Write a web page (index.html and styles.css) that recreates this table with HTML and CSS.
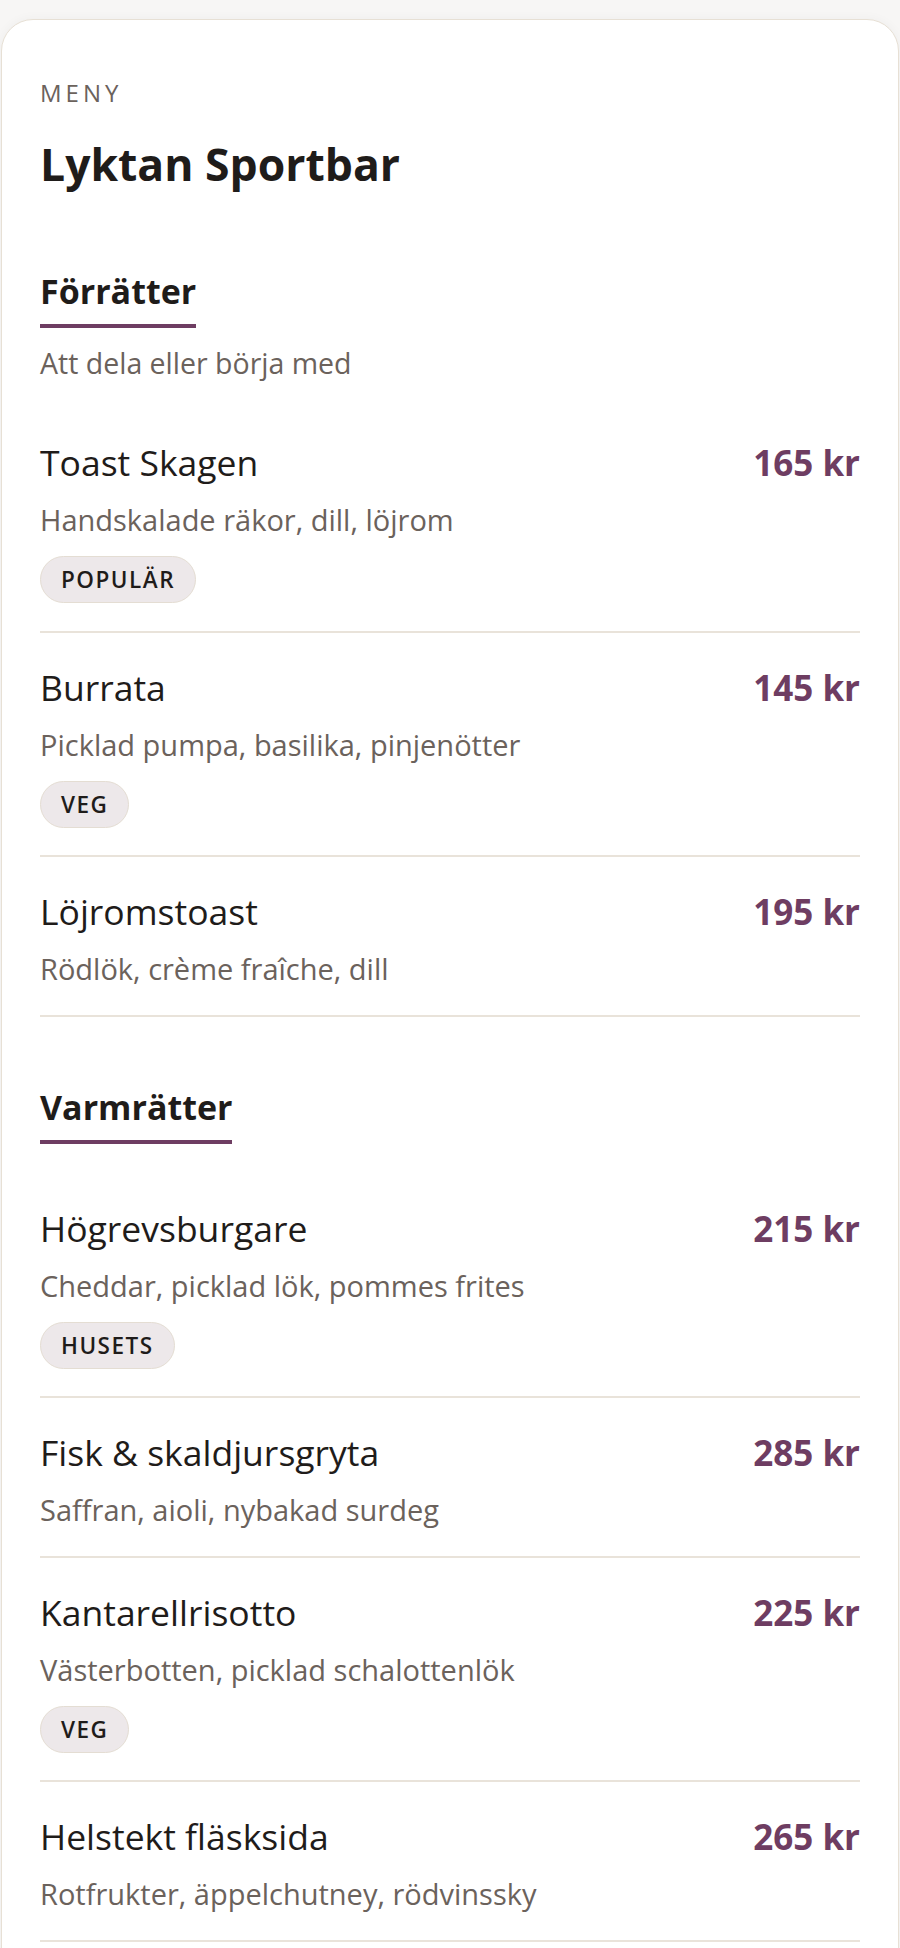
FILE: index.html
```html
<!DOCTYPE html>
<html lang="sv">
<head>
  <meta charset="UTF-8" />
  <meta name="viewport" content="width=device-width, initial-scale=1.0"/>
  <title>Meny - Lyktan Sportbar</title>
  <link rel="stylesheet" href="styles.css">
</head>
<body>

  <div class="menu-card">
    <div class="eyebrow">MENY</div>
    <h1 class="venue">Lyktan Sportbar</h1>

    <section class="menu-section">
      <h2 class="section-title">Förrätter</h2>
      <p class="section-sub">Att dela eller börja med</p>

      <div class="dish">
        <div class="dish-row">
          <span class="dish-name">Toast Skagen</span>
          <span class="dish-price">165 kr</span>
        </div>
        <div class="dish-desc">Handskalade räkor, dill, löjrom</div>
        <span class="tag">POPULÄR</span>
      </div>

      <div class="dish">
        <div class="dish-row">
          <span class="dish-name">Burrata</span>
          <span class="dish-price">145 kr</span>
        </div>
        <div class="dish-desc">Picklad pumpa, basilika, pinjenötter</div>
        <span class="tag">VEG</span>
      </div>

      <div class="dish">
        <div class="dish-row">
          <span class="dish-name">Löjromstoast</span>
          <span class="dish-price">195 kr</span>
        </div>
        <div class="dish-desc">Rödlök, crème fraîche, dill</div>
      </div>
    </section>

    <section class="menu-section">
      <h2 class="section-title">Varmrätter</h2>

      <div class="dish">
        <div class="dish-row">
          <span class="dish-name">Högrevsburgare</span>
          <span class="dish-price">215 kr</span>
        </div>
        <div class="dish-desc">Cheddar, picklad lök, pommes frites</div>
        <span class="tag">HUSETS</span>
      </div>

      <div class="dish">
        <div class="dish-row">
          <span class="dish-name">Fisk &amp; skaldjursgryta</span>
          <span class="dish-price">285 kr</span>
        </div>
        <div class="dish-desc">Saffran, aioli, nybakad surdeg</div>
      </div>

      <div class="dish">
        <div class="dish-row">
          <span class="dish-name">Kantarellrisotto</span>
          <span class="dish-price">225 kr</span>
        </div>
        <div class="dish-desc">Västerbotten, picklad schalottenlök</div>
        <span class="tag">VEG</span>
      </div>

      <div class="dish">
        <div class="dish-row">
          <span class="dish-name">Helstekt fläsksida</span>
          <span class="dish-price">265 kr</span>
        </div>
        <div class="dish-desc">Rotfrukter, äppelchutney, rödvinssky</div>
      </div>
    </section>
  </div>

</body>
</html>
```

FILE: styles.css
```css
body {
  margin: 0;
  background: #f7f6f5;
  font-family: 'Open Sans', 'Noto Sans', sans-serif;
  color: #1f1c1a;
}

.menu-card {
  margin: 19px 1px 0;
  padding: 58px 38px 40px;
  background: #ffffff;
  border: 1.5px solid #e7e0d5;
  border-radius: 32px;
  box-shadow: 0 0 12px rgba(0, 0, 0, 0.04);
}

.eyebrow {
  font-size: 24px;
  letter-spacing: 4px;
  color: #6b625c;
  line-height: 30px;
}

.venue {
  margin: 28px 0 0;
  font-size: 44.5px;
  font-weight: 700;
  line-height: 56px;
}

.menu-section {
  margin-top: 77px;
}

.menu-section + .menu-section {
  margin-top: 68px;
}

.section-title {
  width: fit-content;
  margin: 0 0 30px;
  padding-bottom: 11px;
  font-size: 34px;
  font-weight: 700;
  line-height: 44px;
  border-bottom: 4px solid #6e3d62;
}

.section-sub {
  margin: -13px 0 27px;
  font-size: 28.5px;
  line-height: 36px;
  color: #6b625c;
}

.dish {
  padding: 32px 0 27.5px;
  border-bottom: 2px solid #e9e3da;
}

.dish-row {
  display: flex;
  justify-content: space-between;
  align-items: baseline;
}

.dish-name {
  font-size: 35.5px;
  font-weight: 500;
  line-height: 44px;
}

.dish-price {
  font-size: 35px;
  font-weight: 700;
  line-height: 44px;
  color: #6e3d62;
}

.dish-desc {
  margin-top: 17px;
  font-size: 29px;
  line-height: 36px;
  color: #6b625c;
}

.tag {
  display: block;
  width: fit-content;
  margin-top: 18px;
  padding: 0 20px;
  font-size: 22.5px;
  font-weight: 600;
  letter-spacing: 1.5px;
  line-height: 45px;
  color: #1f1c1a;
  background: #ede8ea;
  border: 1.5px solid #e4ddd3;
  border-radius: 999px;
}
```
